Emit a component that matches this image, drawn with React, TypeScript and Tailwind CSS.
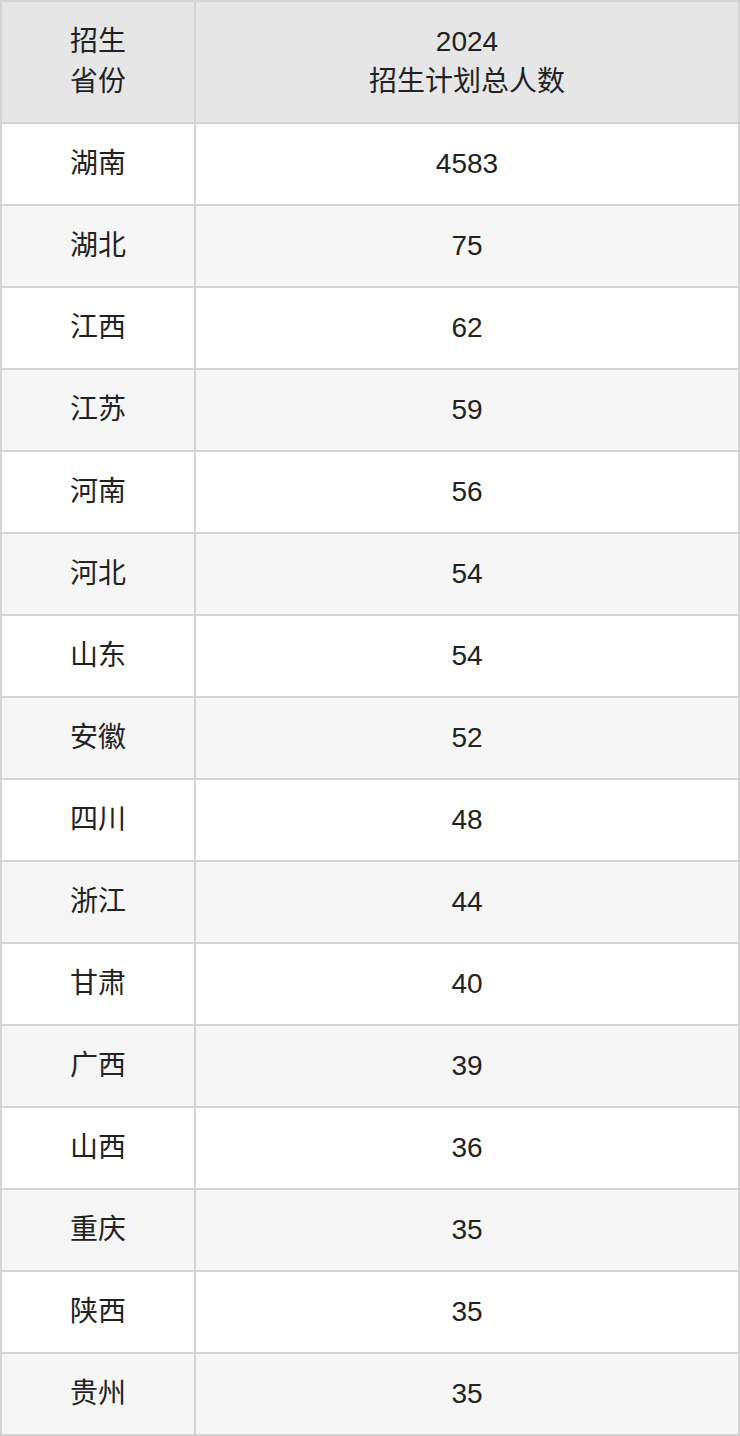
const rows: [string, string][] = [
  ["湖南", "4583"],
  ["湖北", "75"],
  ["江西", "62"],
  ["江苏", "59"],
  ["河南", "56"],
  ["河北", "54"],
  ["山东", "54"],
  ["安徽", "52"],
  ["四川", "48"],
  ["浙江", "44"],
  ["甘肃", "40"],
  ["广西", "39"],
  ["山西", "36"],
  ["重庆", "35"],
  ["陕西", "35"],
  ["贵州", "35"],
];

export default function App() {
  return (
    <div className="w-[740px] bg-white font-['Liberation_Sans','Noto_Sans_CJK_SC',sans-serif] text-[28px] text-[#222]">
      <div className="border-2 border-[#d4d4d4]">
        <div className="flex h-[120px] bg-[#e6e6e6] leading-[40px]">
          <div className="w-[194px] shrink-0 border-r-2 border-[#d4d4d4] flex items-center justify-center text-center">
            <div>
              招生
              <br />
              省份
            </div>
          </div>
          <div className="flex-1 flex items-center justify-center text-center">
            <div>
              2024
              <br />
              招生计划总人数
            </div>
          </div>
        </div>
        {rows.map(([prov, num], i) => (
          <div
            key={prov}
            className={`flex h-[82px] border-t-2 border-[#d4d4d4] ${i % 2 === 0 ? "bg-white" : "bg-[#f6f6f6]"}`}
          >
            <div className="w-[194px] shrink-0 border-r-2 border-[#d4d4d4] flex items-center justify-center">
              {prov}
            </div>
            <div className="flex-1 flex items-center justify-center">{num}</div>
          </div>
        ))}
      </div>
    </div>
  );
}
